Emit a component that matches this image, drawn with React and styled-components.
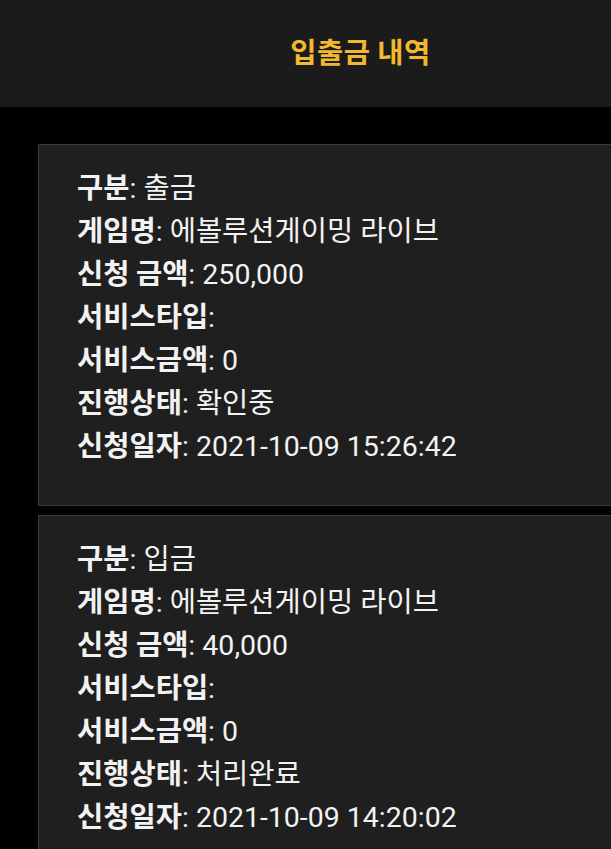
import React from 'react';
import styled, { createGlobalStyle } from 'styled-components';

const GlobalStyle = createGlobalStyle`
  html, body {
    margin: 0;
    padding: 0;
    background-color: #000;
    overflow: hidden;
  }
  body {
    font-family: Roboto, "Noto Sans CJK KR", sans-serif;
  }
`;

const Page = styled.div`
  width: 611px;
  min-height: 849px;
  background-color: #000;
  overflow: hidden;
`;

const Header = styled.header`
  height: 107px;
  display: flex;
  align-items: center;
  justify-content: center;
  padding: 0 0 6px 110px;
  box-sizing: border-box;
  background-color: #1b1b1b;
`;

const Title = styled.h1`
  margin: 0;
  color: #f2b830;
  font-size: 28.5px;
  font-weight: 700;
  font-family: "Noto Sans CJK KR", sans-serif;
  letter-spacing: 0.5px;
`;

const List = styled.div`
  display: flex;
  flex-direction: column;
  gap: 9px;
  padding: 37px 0 0 38px;
`;

const Card = styled.section`
  width: 640px;
  box-sizing: border-box;
  padding: 19px 38px 40px;
  background-color: #1f1f1f;
  border: 1px solid #3a3a3a;
`;

const Row = styled.div`
  height: 43px;
  line-height: 43px;
  color: #f2f2f2;
  font-size: 28.5px;
  white-space: nowrap;
`;

const Label = styled.span`
  font-weight: 700;
  font-family: "Noto Sans CJK KR", sans-serif;
`;

const Value = styled.span`
  font-weight: 400;
`;

const records = [
  {
    type: '출금',
    game: '에볼루션게이밍 라이브',
    amount: '250,000',
    serviceType: '',
    serviceAmount: '0',
    status: '확인중',
    date: '2021-10-09 15:26:42',
  },
  {
    type: '입금',
    game: '에볼루션게이밍 라이브',
    amount: '40,000',
    serviceType: '',
    serviceAmount: '0',
    status: '처리완료',
    date: '2021-10-09 14:20:02',
  },
];

function Field({ label, value }) {
  return (
    <Row>
      <Label>{label}</Label>
      <Value>: {value}</Value>
    </Row>
  );
}

export default function App() {
  return (
    <Page>
      <GlobalStyle />
      <Header>
        <Title>입출금 내역</Title>
      </Header>
      <List>
        {records.map((r, i) => (
          <Card key={`record-${i}`}>
            <Field label="구분" value={r.type} />
            <Field label="게임명" value={r.game} />
            <Field label="신청 금액" value={r.amount} />
            <Field label="서비스타입" value={r.serviceType} />
            <Field label="서비스금액" value={r.serviceAmount} />
            <Field label="진행상태" value={r.status} />
            <Field label="신청일자" value={r.date} />
          </Card>
        ))}
      </List>
    </Page>
  );
}
